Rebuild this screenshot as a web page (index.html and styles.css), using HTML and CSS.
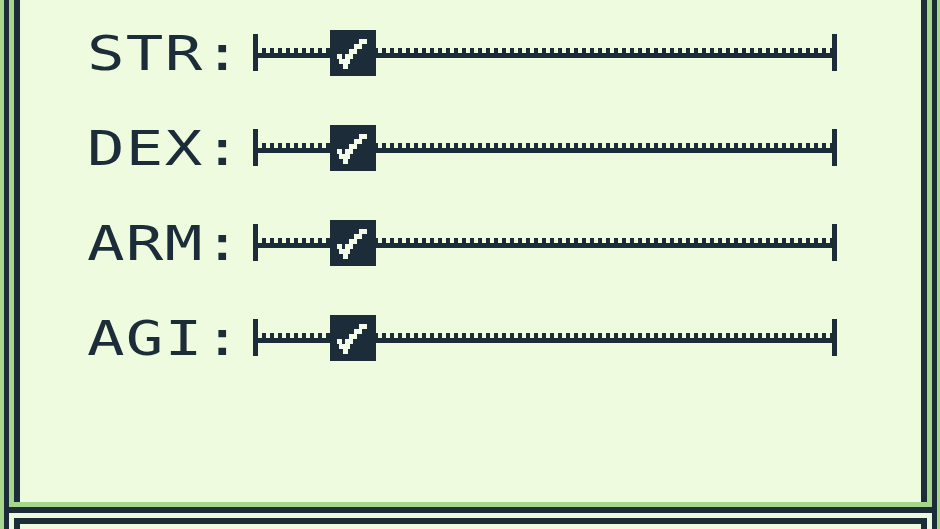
FILE: index.html
```html
<!DOCTYPE html>
<html>
    <head>
        <meta http-equiv="Content-Type" content="text/html; charset=utf-8" />
        <title>Stats</title>
        <link rel="stylesheet" href="styles.css">
    </head>
    <body>
        <div class="window stats">
            <div class="pane">
                <div class="stat">
                    <span class="label">STR:</span>
                    <div class="slider">
                        <span class="cap"></span>
                        <span class="track"></span>
                        <span class="cap"></span>
                        <span class="knob">
                            <svg viewBox="0 0 46 46" shape-rendering="crispEdges"><path d="M29 9h8v5h-8z M24 14h8v5h-8z M19 19h8v5h-8z M7 24h5v5h-5z M15 24h8v5h-8z M9 29h11v5h-11z M13 34h5v5h-5z"/></svg>
                        </span>
                    </div>
                </div>
                <div class="stat">
                    <span class="label">DEX:</span>
                    <div class="slider">
                        <span class="cap"></span>
                        <span class="track"></span>
                        <span class="cap"></span>
                        <span class="knob">
                            <svg viewBox="0 0 46 46" shape-rendering="crispEdges"><path d="M29 9h8v5h-8z M24 14h8v5h-8z M19 19h8v5h-8z M7 24h5v5h-5z M15 24h8v5h-8z M9 29h11v5h-11z M13 34h5v5h-5z"/></svg>
                        </span>
                    </div>
                </div>
                <div class="stat">
                    <span class="label">ARM:</span>
                    <div class="slider">
                        <span class="cap"></span>
                        <span class="track"></span>
                        <span class="cap"></span>
                        <span class="knob">
                            <svg viewBox="0 0 46 46" shape-rendering="crispEdges"><path d="M29 9h8v5h-8z M24 14h8v5h-8z M19 19h8v5h-8z M7 24h5v5h-5z M15 24h8v5h-8z M9 29h11v5h-11z M13 34h5v5h-5z"/></svg>
                        </span>
                    </div>
                </div>
                <div class="stat">
                    <span class="label">AGI:</span>
                    <div class="slider">
                        <span class="cap"></span>
                        <span class="track"></span>
                        <span class="cap"></span>
                        <span class="knob">
                            <svg viewBox="0 0 46 46" shape-rendering="crispEdges"><path d="M29 9h8v5h-8z M24 14h8v5h-8z M19 19h8v5h-8z M7 24h5v5h-5z M15 24h8v5h-8z M9 29h11v5h-11z M13 34h5v5h-5z"/></svg>
                        </span>
                    </div>
                </div>
            </div>
        </div>
        <div class="window dialog">
            <div class="pane"></div>
        </div>
    </body>
</html>
```

FILE: styles.css
```css
html, body {
    margin:         0px;
    height:         529px;
    overflow:       hidden;
}
body {
    background:     #a6d68c;
    font-family:    "DejaVu Sans Mono", monospace;
    color:          #1c2d39;
}

/* double-lined windows */
div.window {
    margin:         0px 3px 0px 4px;
    padding:        5px;
    background:     #a6d68c;
    border:         5px solid #1c2d39;
}
div.window div.pane {
    background:     #effbdf;
    border:         6px solid #1c2d39;
}
div.stats {
    border-top:     none;
    border-bottom:  none;
    padding-top:    0px;
}
div.stats div.pane {
    border-top:     none;
    border-bottom:  none;
    height:         497px;
    padding:        5px 84px 0px 67px;
}
div.dialog {
    border-width:   6px 5px;
    background:     #eef8df;
}
div.dialog div.pane {
    height:         40px;
}

/* stat rows */
div.stat {
    display:        flex;
    align-items:    center;
    height:         95px;
}
span.label {
    display:        inline-block;
    width:          166px;
    flex:           none;
    font-size:      48px;
    line-height:    48px;
    letter-spacing: 1px;
    white-space:    nowrap;
    transform:      scaleX(1.3);
    transform-origin: left center;
}

/* slider with ticks */
div.slider {
    position:       relative;
    flex:           1;
    display:        flex;
    align-items:    center;
}
div.slider span.cap {
    width:          5px;
    height:         37px;
    background:     #1c2d39;
}
div.slider span.track {
    flex:           1;
    height:         5px;
    border-bottom:  5px solid #1c2d39;
    background:     repeating-linear-gradient(to right, transparent 0px, transparent 4px, #1c2d39 4px, #1c2d39 8px);
}
div.slider span.knob {
    position:       absolute;
    left:           77px;
    top:            50%;
    margin-top:     -23px;
    width:          46px;
    height:         46px;
    background:     #1c2d39;
}
div.slider span.knob svg {
    display:        block;
    width:          46px;
    height:         46px;
    fill:           #f4fbe8;
}
```
